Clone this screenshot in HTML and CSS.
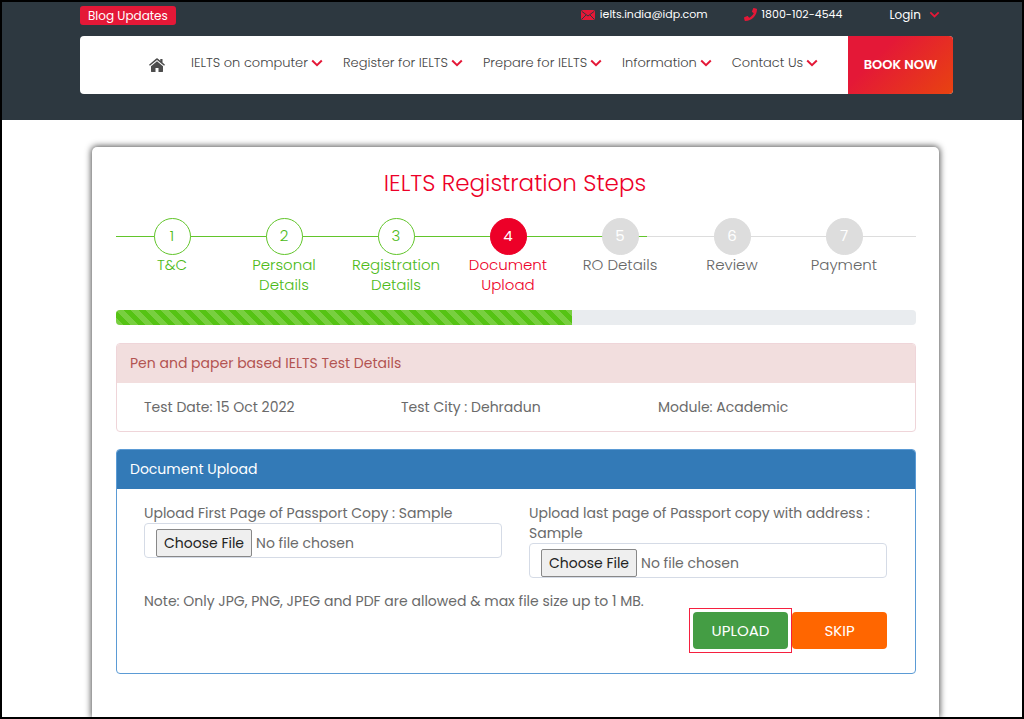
FILE: index.html
```
<!DOCTYPE html>
<html lang="en">
<head>
<meta charset="utf-8">
<meta name="viewport" content="width=device-width, initial-scale=1">
<title>IELTS Registration Steps</title>
<link rel="stylesheet" href="styles.css">
</head>
<body>
<svg class="sprite" aria-hidden="true">
  <symbol id="chevron" viewBox="0 0 12 8"><path d="M1.200 1.500 6 6.200l4.800-4.700" fill="none" stroke="currentColor" stroke-width="2"/></symbol>
</svg>
<div class="frame">
  <header class="header">
    <div class="topbar">
      <a class="badge" href="#">Blog Updates</a>
      <a class="contact mail" href="#">
        <svg width="14" height="10" viewBox="0 0 14 10"><rect width="14" height="10" rx="2" fill="#e41837"/><path d="M1 1.500 7 6l6-4.500M1 9l4-4M13 9 9 5" fill="none" stroke="#2d3840" stroke-width="1"/></svg>
        ielts.india@idp.com</a>
      <a class="contact phone" href="#">
        <svg width="13" height="13" viewBox="0 0 512 512"><path fill="#e41837" d="M493 25 389 1c-11-3-23 3-27 14l-48 112c-4 10-1 22 7 28l61 50c-36 76-99 139-177 177l-50-61c-7-8-18-11-28-7L15 362c-11 5-17 16-14 27l24 104c3 11 12 19 24 19 256 0 463-207 463-463 0-12-8-21-19-24z"/></svg>
        1800-102-4544</a>
      <a class="contact login" href="#">Login <svg class="chev small"><use href="#chevron"/></svg></a>
    </div>
    <div class="navbar">
      <nav class="nav">
        <a class="home" href="#" aria-label="Home"><svg width="16" height="14" viewBox="0 0 16 14"><path fill="#4d4d4d" d="M8 3.200 14 8.300V13.500c0 .3-.2.500-.5.500H9.500V10h-3v4H2.500c-.3 0-.5-.2-.5-.5V8.300zM7.300.5a1 1 0 0 1 1.400 0L11.300 2.700V1h2.200v3.600L16 6.800l-.9 1L8 1.900.9 7.800l-.9-1z"/></svg></a>
        <a href="#">IELTS on computer <svg class="chev"><use href="#chevron"/></svg></a>
        <a href="#">Register for IELTS <svg class="chev"><use href="#chevron"/></svg></a>
        <a href="#">Prepare for IELTS <svg class="chev"><use href="#chevron"/></svg></a>
        <a href="#">Information <svg class="chev"><use href="#chevron"/></svg></a>
        <a href="#">Contact Us <svg class="chev"><use href="#chevron"/></svg></a>
      </nav>
      <a class="book" href="#">BOOK NOW</a>
    </div>
  </header>
  <main class="main">
    <section class="card">
      <h1 class="title">IELTS Registration Steps</h1>
      <ol class="steps">
        <li class="done"><span class="dot">1</span>T&amp;C</li>
        <li class="done"><span class="dot">2</span>Personal Details</li>
        <li class="done"><span class="dot">3</span>Registration Details</li>
        <li class="active"><span class="dot">4</span>Document Upload</li>
        <li><span class="dot">5</span>RO Details</li>
        <li><span class="dot">6</span>Review</li>
        <li><span class="dot">7</span>Payment</li>
      </ol>
      <div class="progress" role="progressbar" aria-valuenow="57" aria-valuemin="0" aria-valuemax="100" aria-label="Registration progress"><div class="bar" style="width:57%"></div></div>
      <section class="panel danger">
        <h2>Pen and paper based IELTS Test Details</h2>
        <div class="details">
          <span>Test Date: 15 Oct 2022</span>
          <span>Test City : Dehradun</span>
          <span>Module: Academic</span>
        </div>
      </section>
      <section class="panel primary">
        <h2>Document Upload</h2>
        <form class="upload">
          <div class="fields">
            <div class="field">
              <label for="first">Upload First Page of Passport Copy : Sample</label>
              <input id="first" type="file">
            </div>
            <div class="field">
              <label for="last">Upload last page of Passport copy with address : Sample</label>
              <input id="last" type="file">
            </div>
          </div>
          <p class="note">Note: Only JPG, PNG, JPEG and PDF are allowed &amp; max file size up to 1 MB.</p>
          <div class="actions">
            <span class="highlight"><button class="btn go" type="button">UPLOAD</button></span>
            <button class="btn skip" type="button">SKIP</button>
          </div>
        </form>
      </section>
    </section>
  </main>
</div>
</body>
</html>
```
FILE: styles.css
```
* { box-sizing: border-box; }
body {
  margin: 0;
  font-family: Poppins, Inter, "Liberation Sans", sans-serif;
  font-size: 14px;
  font-weight: 400;
  line-height: 20px;
  color: #6a6a6a;
  background: #fff;
}
a { color: inherit; text-decoration: none; }
.sprite { display: none; }
.frame {
  min-height: 100vh;
  display: flex;
  flex-direction: column;
  border: 2px solid #000;
  overflow: hidden;
}
.header {
  padding: 4px 69px 26px 78px;
  background: #2d3840;
}
.topbar {
  display: flex;
  align-items: flex-start;
  height: 30px;
  color: #fff;
  font-size: 11px;
  line-height: 17px;
}
.badge {
  padding: 0 8px;
  margin-right: auto;
  border-radius: 3px;
  background: #e41837;
  font-size: 12px;
  line-height: 19px;
}
.contact { display: flex; align-items: center; gap: 5px; }
.phone { margin-left: 36px; }
.login { margin: 0 13px 0 47px; font-size: 12px; gap: 8px; }
.chev { width: 12px; height: 8px; color: #e41837; }
.small { width: 11px; height: 7px; }
.navbar {
  display: flex;
  height: 58px;
  border-radius: 4px;
  overflow: hidden;
  background: #fff;
}
.nav {
  flex: 1;
  display: flex;
  align-items: center;
  gap: 20px;
  padding: 0 20px 4px 69px;
  color: #444;
  font-size: 13px;
  font-weight: 300;
  white-space: nowrap;
}
.nav a { display: flex; align-items: center; gap: 3px; }
.nav .home { margin-right: 6px; padding-top: 4px; }
.book {
  flex: none;
  display: flex;
  align-items: center;
  justify-content: center;
  width: 105px;
  color: #fff;
  font-size: 13px;
  font-weight: 600;
  background: linear-gradient(135deg, #e41837 30%, #e84310);
}
.main {
  flex: 1;
  display: flex;
  padding: 27px 83px 0 90px;
}
.card {
  flex: 1;
  min-width: 0;
  padding: 23px 23px 40px 24px;
  border-radius: 5px 5px 0 0;
  background: #fff;
  box-shadow: 0 0 6px 1px #555;
}
.title {
  margin: 0;
  padding-right: 2px;
  text-align: center;
  color: #ed0028;
  font-size: 23px;
  font-weight: 300;
  line-height: 26px;
}
.steps {
  display: grid;
  grid-template-columns: repeat(7, 1fr);
  margin: 22px 0 15px;
  padding: 0 16px 0 0;
  min-height: 77px;
  list-style: none;
  background: linear-gradient(#62c52b, #62c52b) 0 18px / calc(66% + 3px) 1px no-repeat,
    linear-gradient(#ddd, #ddd) 0 18px / 100% 1px no-repeat;
  text-align: center;
  color: #666;
  font-size: 15px;
  font-weight: 300;
}
.steps li {
  display: flex;
  flex-direction: column;
  align-items: center;
  padding: 0 4px;
}
.dot {
  width: 37px;
  height: 37px;
  border: 1px solid #ddd;
  border-radius: 50%;
  background: #ddd;
  color: #fff;
  font-weight: 400;
  line-height: 34px;
}
.steps .done { color: #4dba18; }
.done .dot { border-color: #62c52b; background: #fff; color: #4dba18; font-weight: 300; }
.steps .active { color: #ed0028; }
.active .dot { border-color: #ed0028; background: #ed0028; color: #fff; }
.progress {
  height: 15px;
  margin-bottom: 18px;
  border-radius: 4px;
  overflow: hidden;
  background: #e9ecef;
}
.bar {
  height: 100%;
  background: linear-gradient(45deg, #78cf40 25%, #55c314 25%, #55c314 50%, #78cf40 50%, #78cf40 75%, #55c314 75%) 0 0 / 15px 15px;
}
.panel { border: 1px solid; border-radius: 4px; margin-bottom: 17px; overflow: hidden; }
.panel h2 {
  margin: 0;
  padding: 9px 13px 10px;
  font-size: 14px;
  font-weight: 400;
}
.danger { border-color: #efd5d9; }
.danger h2 { background: #f2dede; color: #b35452; }
.primary { border-color: #5b9bd5; margin-bottom: 0; }
.primary h2 { background: #337ab7; color: #fff; }
.details {
  display: grid;
  grid-template-columns: repeat(3, 1fr);
  padding: 14px 0 14px 27px;
}
.upload { padding: 14px 28px 20px 27px; }
.fields { display: grid; grid-template-columns: 1fr 1fr; gap: 27px; }
.field label { display: block; }
.field input {
  display: block;
  width: 100%;
  height: 35px;
  padding: 5px 11px 0;
  border: 1px solid #d5dbe6;
  border-radius: 4px;
  font: inherit;
  color: #6a6a6a;
}
.field input::file-selector-button {
  height: 28px;
  padding: 0 7px;
  border: 1px solid #888;
  border-radius: 2px;
  background: #efefef;
  color: #222;
  font: inherit;
}
.note { margin: 13px 0 -3px; }
.actions { display: flex; justify-content: flex-end; align-items: center; }
.highlight {
  padding: 3px;
  border: 1px solid #f5203f;
}
.btn {
  display: block;
  min-width: 95px;
  height: 37px;
  border: 0;
  border-radius: 4px;
  color: #fff;
  font: inherit;
  font-size: 15px;
}
.go { background: #449d44; }
.skip { background: #ff6600; }
```
